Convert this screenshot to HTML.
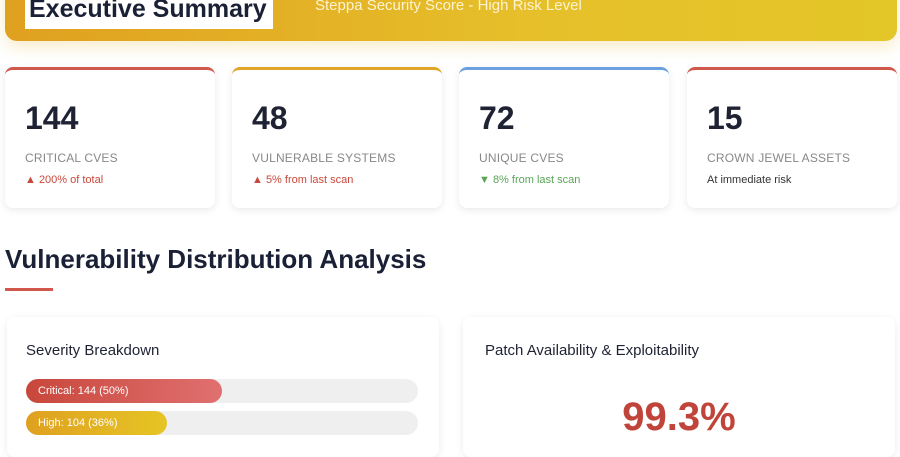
<!DOCTYPE html>
<html><head><style>
*{box-sizing:border-box;margin:0;padding:0}
body{width:900px;height:444px;overflow:hidden;background:#fff;font-family:"Liberation Sans",sans-serif;position:relative;color:#1e2233}
.banner{position:absolute;left:5px;top:-20px;width:892px;height:61px;border-radius:0 0 12px 12px;background:linear-gradient(90deg,#e0a020,#e6c02a 60%,#e3c628);box-shadow:0 6px 16px rgba(230,180,40,.25)}
.title{position:absolute;left:25px;top:0;width:248px;height:29px;background:#fff;font-size:25px;font-weight:bold;color:#1a2035;line-height:18px;padding-left:4px;overflow:hidden;white-space:nowrap}
.sub{position:absolute;left:315px;top:-3px;font-size:15px;color:#fdf3d0;white-space:nowrap}
.card{position:absolute;top:67px;width:210px;height:141px;background:#fff;border-radius:8px;box-shadow:0 2px 8px rgba(0,0,0,.09);border-top:3px solid}
.card .n{position:absolute;left:20px;top:30px;font-size:32px;font-weight:bold;color:#1e2233}
.card .l{position:absolute;left:20px;top:81px;font-size:12px;color:#888;letter-spacing:.2px}
.card .c{position:absolute;left:20px;top:104px;font-size:11px}
h2{position:absolute;left:5px;top:244px;font-size:26px;font-weight:bold;color:#1a2035;white-space:nowrap}
.ul{position:absolute;left:5px;top:288px;width:48px;height:3px;background:#d0574b}
.panel{position:absolute;top:317px;height:140px;background:#fff;border-radius:8px;box-shadow:0 2px 8px rgba(0,0,0,.08)}
.pt{position:absolute;top:25px;font-size:15px;color:#1e2233}
.bar{position:absolute;left:19px;width:392px;height:24px;border-radius:12px;background:#efefef}
.fill{height:24px;border-radius:12px;color:#fff;font-size:11px;line-height:24px;padding-left:12px}
</style></head><body>
<div class="banner"></div>
<div class="title">Executive Summary</div>
<div class="sub">Steppa Security Score - High Risk Level</div>

<div class="card" style="left:5px;border-color:#d0574b"><div class="n">144</div><div class="l">CRITICAL CVES</div><div class="c" style="color:#c8473b">▲ 200% of total</div></div>
<div class="card" style="left:232px;border-color:#e0a526"><div class="n">48</div><div class="l">VULNERABLE SYSTEMS</div><div class="c" style="color:#c8473b">▲ 5% from last scan</div></div>
<div class="card" style="left:459px;border-color:#6a9fe0"><div class="n">72</div><div class="l">UNIQUE CVES</div><div class="c" style="color:#5aa55a">▼ 8% from last scan</div></div>
<div class="card" style="left:687px;border-color:#d0574b"><div class="n">15</div><div class="l">CROWN JEWEL ASSETS</div><div class="c" style="color:#333">At immediate risk</div></div>

<h2>Vulnerability Distribution Analysis</h2>
<div class="ul"></div>

<div class="panel" style="left:7px;width:432px">
<div class="pt" style="left:19px">Severity Breakdown</div>
<div class="bar" style="top:62px"><div class="fill" style="width:196px;background:linear-gradient(90deg,#c8473b,#e07070)">Critical: 144 (50%)</div></div>
<div class="bar" style="top:94px"><div class="fill" style="width:141px;background:linear-gradient(90deg,#dfa020,#e6c525)">High: 104 (36%)</div></div>
</div>
<div class="panel" style="left:463px;width:432px">
<div class="pt" style="left:22px">Patch Availability &amp; Exploitability</div>
<div style="position:absolute;left:0;width:432px;text-align:center;top:78px;font-size:40px;font-weight:bold;color:#c0443a">99.3%</div>
</div>
</body></html>
